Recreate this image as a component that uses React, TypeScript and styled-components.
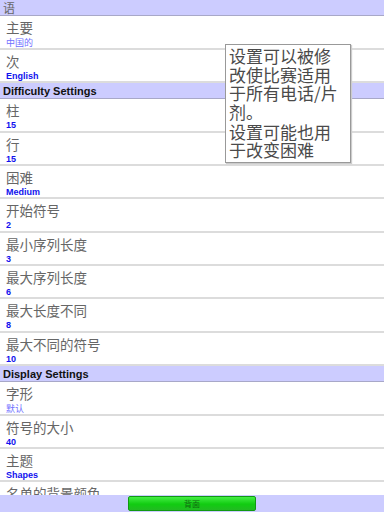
import { type FC } from 'react'
import styled, { createGlobalStyle } from 'styled-components'

const GlobalStyle = createGlobalStyle`
  html, body {
    margin: 0;
    padding: 0;
    background: #ffffff;
  }
`

const Screen = styled.div`
  position: relative;
  width: 384px;
  height: 512px;
  overflow: hidden;
  background: #ffffff;
  font-family: 'Liberation Sans', 'Noto Sans CJK SC', sans-serif;
`

const List = styled.div`
  display: flex;
  flex-direction: column;
`

const SectionHeader = styled.div<{ $cjk?: boolean }>`
  height: 15.33px;
  flex-shrink: 0;
  display: flex;
  align-items: center;
  padding-left: 3px;
  background: #ccccff;
  border-bottom: 1px solid #a8a8c8;
  font-size: ${(p) => (p.$cjk ? '12px' : '11px')};
  font-weight: ${(p) => (p.$cjk ? 'normal' : 'bold')};
  color: ${(p) => (p.$cjk ? '#666666' : '#111111')};
`

const Row = styled.div`
  height: 31.33px;
  flex-shrink: 0;
  display: flex;
  flex-direction: column;
  padding-left: 6px;
  border-bottom: 2px solid #dcdcdc;
`

const Title = styled.div`
  margin-top: 2px;
  height: 20px;
  font-family: 'Noto Sans CJK SC', sans-serif;
  font-size: 13.5px;
  line-height: 19px;
  color: #666666;
`

const Value = styled.div<{ $soft?: boolean }>`
  font-family: ${(p) => (p.$soft ? "'Noto Sans CJK SC', sans-serif" : "'Liberation Sans', sans-serif")};
  font-size: 9px;
  line-height: 9px;
  font-weight: ${(p) => (p.$soft ? 'normal' : 'bold')};
  color: ${(p) => (p.$soft ? '#7070ff' : '#1111ee')};
`

const Tip = styled.div`
  position: absolute;
  left: 225px;
  top: 44px;
  width: 119px;
  padding: 2px 2px 2px 3px;
  white-space: nowrap;
  background: #ffffff;
  border: 1px solid #999999;
  box-shadow: 1px 1px 1px #cccccc;
  font-family: 'Noto Sans CJK SC', sans-serif;
  font-size: 17px;
  line-height: 18.5px;
  color: #4a4a4a;
`

const TipLine = styled.div<{ $gap?: boolean }>`
  margin-top: ${(p) => (p.$gap ? '1.5px' : '0')};
`

const Footer = styled.div`
  position: absolute;
  left: 0;
  right: 0;
  bottom: 0;
  height: 17px;
  display: flex;
  align-items: flex-end;
  justify-content: center;
  background: #ccccff;
`

const BackButton = styled.button`
  width: 128px;
  height: 15px;
  margin: 0 0 1px 0;
  padding: 0;
  border: 1px solid #119911;
  border-radius: 2px;
  background: linear-gradient(#44ee44, #11cc11 55%, #22bb22);
  font-family: 'Noto Sans CJK SC', sans-serif;
  font-size: 8px;
  line-height: 13px;
  color: #116611;
`

interface Item {
  title: string
  value: string
  soft?: boolean
}

const languageItems: Item[] = [
  { title: '主要', value: '中国的', soft: true },
  { title: '次', value: 'English' },
]

const difficultyItems: Item[] = [
  { title: '柱', value: '15' },
  { title: '行', value: '15' },
  { title: '困难', value: 'Medium' },
  { title: '开始符号', value: '2' },
  { title: '最小序列长度', value: '3' },
  { title: '最大序列长度', value: '6' },
  { title: '最大长度不同', value: '8' },
  { title: '最大不同的符号', value: '10' },
]

const displayItems: Item[] = [
  { title: '字形', value: '默认', soft: true },
  { title: '符号的大小', value: '40' },
  { title: '主题', value: 'Shapes' },
  { title: '名单的背景颜色', value: '' },
]

const tipLines = ['设置可以被修', '改使比赛适用', '于所有电话/片', '剂。', '设置可能也用', '于改变困难']

const Rows: FC<{ items: Item[] }> = ({ items }) => (
  <>
    {items.map((item) => (
      <Row key={item.title}>
        <Title>{item.title}</Title>
        <Value $soft={item.soft}>{item.value}</Value>
      </Row>
    ))}
  </>
)

export default function App() {
  return (
    <Screen>
      <GlobalStyle />
      <List>
        <SectionHeader $cjk>语</SectionHeader>
        <Rows items={languageItems} />
        <SectionHeader>Difficulty Settings</SectionHeader>
        <Rows items={difficultyItems} />
        <SectionHeader>Display Settings</SectionHeader>
        <Rows items={displayItems} />
      </List>
      <Tip>
        {tipLines.map((line, i) => (
          <TipLine key={line} $gap={i === 4}>
            {line}
          </TipLine>
        ))}
      </Tip>
      <Footer>
        <BackButton>背面</BackButton>
      </Footer>
    </Screen>
  )
}
